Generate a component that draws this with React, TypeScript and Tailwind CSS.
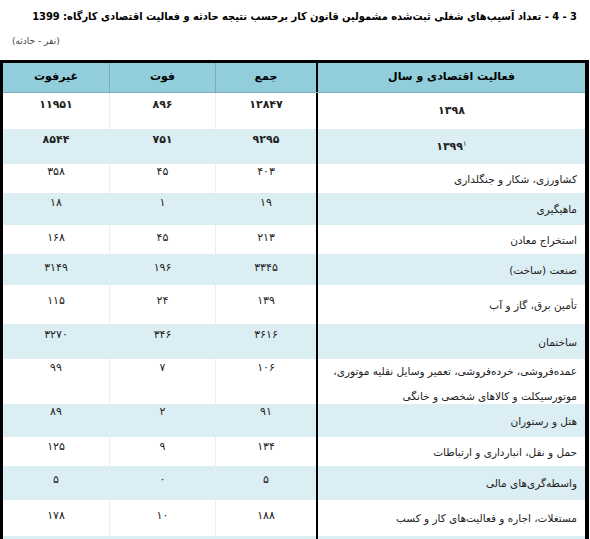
import React from "react";

type Row = {
  c: string;
  f: string;
  g: string;
  label: React.ReactNode;
  h: number;
  blue: boolean;
  pt: number;
  center?: boolean;
  bold?: boolean;
};

const rows: Row[] = [
  { c: "۱۲۸۴۷", f: "۸۹۶", g: "۱۱۹۵۱", label: "۱۳۹۸", h: 36, blue: false, pt: 5, center: true, bold: true },
  {
    c: "۹۲۹۵",
    f: "۷۵۱",
    g: "۸۵۴۴",
    label: (
      <span>
        ۱۳۹۹<sup className="text-[7px] font-normal">۱</sup>
      </span>
    ),
    h: 35,
    blue: true,
    pt: 4,
    center: true,
    bold: true,
  },
  { c: "۴۰۳", f: "۴۵", g: "۳۵۸", label: "کشاورزی، شکار و جنگلداری", h: 29, blue: false, pt: 1 },
  { c: "۱۹", f: "۱", g: "۱۸", label: "ماهیگیری", h: 32, blue: true, pt: 3 },
  { c: "۲۱۳", f: "۴۵", g: "۱۶۸", label: "استخراج معادن", h: 29, blue: false, pt: 6 },
  { c: "۳۳۴۵", f: "۱۹۶", g: "۳۱۴۹", label: "صنعت (ساخت)", h: 31, blue: true, pt: 7 },
  { c: "۱۳۹", f: "۲۴", g: "۱۱۵", label: "تأمین برق، گاز و آب", h: 39, blue: false, pt: 9 },
  { c: "۳۶۱۶", f: "۳۴۶", g: "۳۲۷۰", label: "ساختمان", h: 35, blue: true, pt: 4 },
  {
    c: "۱۰۶",
    f: "۷",
    g: "۹۹",
    label: (
      <span className="leading-[25px]">
        عمده‌فروشی، خرده‌فروشی، تعمیر وسایل نقلیه موتوری،
        <br />
        موتورسیکلت و کالاهای شخصی و خانگی
      </span>
    ),
    h: 45,
    blue: false,
    pt: 2,
  },
  { c: "۹۱", f: "۲", g: "۸۹", label: "هتل و رستوران", h: 33, blue: true, pt: 1 },
  { c: "۱۳۴", f: "۹", g: "۱۲۵", label: "حمل و نقل، انبارداری و ارتباطات", h: 29, blue: false, pt: 3 },
  { c: "۵", f: "۰", g: "۵", label: "واسطه‌گری‌های مالی", h: 34, blue: true, pt: 7 },
  { c: "۱۸۸", f: "۱۰", g: "۱۷۸", label: "مستغلات، اجاره و فعالیت‌های کار و کسب", h: 36, blue: false, pt: 9 },
  { c: "", f: "", g: "", label: "", h: 20, blue: true, pt: 0 },
];

const font = { fontFamily: '"DejaVu Sans", "Noto Sans", sans-serif' };
const titleFont = { fontFamily: '"DejaVu Sans Condensed", "DejaVu Sans", sans-serif' };

export default function App() {
  return (
    <div className="w-[590px] h-[539px] overflow-hidden bg-white text-[#222]" style={font}>
      <div className="h-[60px] flex flex-col">
        <div
          dir="rtl"
          className="pr-[13px] pt-[8px] text-[11px] font-bold leading-[18px] whitespace-nowrap text-black"
          style={titleFont}
        >
          3 - 4 - تعداد آسیب‌های شغلی ثبت‌شده مشمولین قانون کار برحسب نتیجه حادثه و فعالیت اقتصادی کارگاه: 1399
        </div>
        <div dir="rtl" className="text-left pl-[12px] pt-[9px] text-[9px] leading-[12px] text-[#444]">
          (نفر - حادثه)
        </div>
      </div>
      <div className="w-[589px] border-l-[3px] border-r-[4px] border-t-[3px] border-black">
        <div className="grid grid-cols-[107px_106px_102px_267px] h-[30px] bg-[#92cddc] border-b border-[#7fa9b5] text-[11px] font-bold text-black">
          <div className="flex items-center justify-center border-r border-[#7fa9b5]">غیرفوت</div>
          <div className="flex items-center justify-center border-r border-[#7fa9b5]">فوت</div>
          <div className="flex items-center justify-center border-r-2 border-black">جمع</div>
          <div dir="rtl" className="flex items-center justify-center">فعالیت اقتصادی و سال</div>
        </div>
        {rows.map((r, i) => (
          <div
            key={i}
            className={`grid grid-cols-[107px_106px_102px_267px] text-[11px] ${r.blue ? "bg-[#dbeef3]" : "bg-white"}`}
            style={{ height: r.h }}
          >
            {[r.g, r.f, r.c].map((v, j) => (
              <div
                key={j}
                className={`flex justify-center leading-[14px] ${r.bold ? "font-bold" : ""} ${j < 2 ? "border-r border-[#e6eef0]" : "border-r-2 border-black"}`}
                style={{ paddingTop: r.pt }}
              >
                {v}
              </div>
            ))}
            <div
              dir="rtl"
              className={`flex items-center leading-[14px] ${r.center ? "justify-center font-bold" : "justify-start pr-[8px] text-[10.5px]"}`}
            >
              {r.label}
            </div>
          </div>
        ))}
      </div>
    </div>
  );
}
